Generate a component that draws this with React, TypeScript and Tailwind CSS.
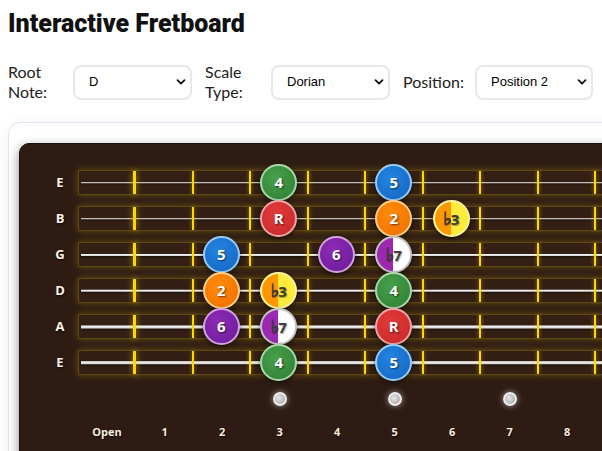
import React from "react";

type Kind = "green" | "blue" | "red" | "orange" | "purple" | "flat3" | "flat7";

type GuitarString = {
  name: string;
  thick: string;
  notes: Record<number, [string, Kind]>;
};

const strings: GuitarString[] = [
  { name: "E", thick: "h-[1.5px]", notes: { 3: ["4", "green"], 5: ["5", "blue"] } },
  { name: "B", thick: "h-[1.5px]", notes: { 3: ["R", "red"], 5: ["2", "orange"], 6: ["♭3", "flat3"] } },
  { name: "G", thick: "h-[2px]", notes: { 2: ["5", "blue"], 4: ["6", "purple"], 5: ["♭7", "flat7"] } },
  { name: "D", thick: "h-[2.5px]", notes: { 2: ["2", "orange"], 3: ["♭3", "flat3"], 5: ["4", "green"] } },
  { name: "A", thick: "h-[3px]", notes: { 2: ["6", "purple"], 3: ["♭7", "flat7"], 5: ["R", "red"] } },
  { name: "E", thick: "h-[3.5px]", notes: { 3: ["4", "green"], 5: ["5", "blue"] } },
];

const kindClass: Record<Kind, string> = {
  green: "bg-[radial-gradient(circle_at_40%_35%,#47a04a,#2f7d33)] border-[#a8d8aa] text-white",
  blue: "bg-[radial-gradient(circle_at_40%_35%,#2284e0,#1565c0)] border-[#93ccf7] text-white",
  red: "bg-[radial-gradient(circle_at_40%_35%,#e23a3a,#c62828)] border-[#f1a3a3] text-white",
  orange: "bg-[radial-gradient(circle_at_40%_35%,#ff8c0a,#ef6c00)] border-[#ffcf8a] text-white",
  purple: "bg-[radial-gradient(circle_at_40%_35%,#8e2bb4,#6a1b9a)] border-[#d3a2df] text-white",
  flat3: "bg-[linear-gradient(90deg,#ff9800_50%,#ffeb3b_50%)] border-[#fff3a0] text-[#3a3a3a]",
  flat7: "bg-[linear-gradient(90deg,#9c27b0_50%,#ffffff_50%)] border-[#c4c4c4] text-[#3a3a3a]",
};

// frets drawn on each string; only 1-8 fit in the window
const frets = [1, 2, 3, 4, 5, 6, 7, 8, 9];
const labels = [1, 2, 3, 4, 5, 6, 7, 8];
const inlays = [3, 5, 7, 9];

function Note({ label, kind }: { label: string; kind: Kind }) {
  const flat = label.startsWith("♭");
  return (
    <div
      className={`relative z-10 flex h-[37px] w-[37px] shrink-0 items-center justify-center rounded-full border-2 text-[15px] font-bold shadow-[0_2px_5px_rgba(0,0,0,0.5)] ${kindClass[kind]} ${
        flat
          ? "[text-shadow:1px_1px_1px_rgba(0,0,0,0.35)]"
          : "[text-shadow:1px_1px_2px_rgba(0,0,0,0.6)]"
      }`}
      style={{ fontFamily: "'Open Sans', 'DejaVu Sans', sans-serif" }}
    >
      {flat ? (
        <span className="flex items-baseline leading-none">
          <span
            className="mr-[-1px] text-[18px] leading-none [-webkit-text-stroke:0.9px_#3a3a3a]"
            style={{ fontFamily: "'DejaVu Sans', sans-serif" }}
          >
            ♭
          </span>
          <span>{label.slice(1)}</span>
        </span>
      ) : (
        label
      )}
    </div>
  );
}

function Select({ value, options, width }: { value: string; options: string[]; width: string }) {
  return (
    <div className={`relative ${width} shrink-0`}>
      <select
        defaultValue={value}
        className="h-[35px] w-full appearance-none rounded-[8px] border-2 border-[#e6e8ec] bg-white pl-[14px] text-[13px] text-black outline-none"
        style={{ fontFamily: "'Liberation Sans', Arial, sans-serif" }}
      >
        {options.map((o) => (
          <option key={o}>{o}</option>
        ))}
      </select>
      <svg
        className="pointer-events-none absolute right-[6px] top-1/2 h-[10px] w-[10px] -translate-y-1/2"
        viewBox="0 0 10 10"
        fill="none"
      >
        <path d="M1.5 3.2 5 6.7 8.5 3.2" stroke="#111" strokeWidth="1.8" strokeLinecap="round" strokeLinejoin="round" />
      </svg>
    </div>
  );
}

function StringRow({ s }: { s: GuitarString }) {
  return (
    <div className="flex items-center">
      <div
        className="w-[30px] shrink-0 text-center text-[13px] font-bold text-[#fbf3e4] [text-shadow:1px_1px_2px_rgba(0,0,0,0.8)]"
        style={{ fontFamily: "'Open Sans', sans-serif" }}
      >
        {s.name}
      </div>
      <div className="relative ml-[3px] flex h-[25px] shrink-0 border border-[rgba(255,215,0,0.22)] bg-[rgba(120,80,20,0.08)] shadow-[0_0_7px_rgba(255,215,0,0.28)]">
        <div
          className={`absolute left-[2px] right-0 top-1/2 -translate-y-1/2 ${s.thick} bg-[linear-gradient(180deg,#ffffff,#cfcfcf)] shadow-[0_1px_2px_rgba(0,0,0,0.6)]`}
        />
        <div className="w-[54px] shrink-0" />
        <div className="relative h-full w-[3px] shrink-0 bg-[#ffd700] shadow-[0_0_6px_rgba(255,215,0,0.7)]" />
        {frets.map((f) => (
          <div key={f} className="flex h-full shrink-0">
            <div className="flex w-[55.5px] items-center justify-center">
              {s.notes[f] && <Note label={s.notes[f][0]} kind={s.notes[f][1]} />}
            </div>
            <div className="relative h-full w-[2px] bg-[#ffd700] shadow-[0_0_4px_rgba(255,215,0,0.55)]" />
          </div>
        ))}
      </div>
    </div>
  );
}

export default function App() {
  return (
    <div className="h-[451px] w-[602px] overflow-hidden bg-white px-[8px] pt-[9px]" style={{ fontFamily: "Lato, 'Open Sans', sans-serif" }}>
      <h1 className="whitespace-nowrap text-[25px] font-black leading-[29px] text-[#111]" style={{ fontFamily: "Roboto, Lato, sans-serif" }}>
        Interactive Fretboard
      </h1>

      <div className="mt-[24px] flex items-center gap-[13px] whitespace-nowrap">
        <label className="w-[52px] shrink-0 whitespace-normal text-[16px] leading-[20px] text-[#222]">Root Note:</label>
        <Select value="D" options={["C", "C#", "D", "D#", "E", "F", "F#", "G", "G#", "A", "A#", "B"]} width="w-[119px]" />
        <label className="w-[53px] shrink-0 whitespace-normal text-[16px] leading-[20px] text-[#222]">Scale Type:</label>
        <Select value="Dorian" options={["Major", "Minor", "Dorian", "Phrygian", "Lydian", "Mixolydian", "Locrian"]} width="w-[119px]" />
        <label className="w-[59px] shrink-0 text-[16px] leading-[20px] text-[#222]">Position:</label>
        <Select value="Position 2" options={["Position 1", "Position 2", "Position 3", "Position 4", "Position 5"]} width="w-[118px]" />
      </div>

      <div className="mt-[20px] w-[820px] rounded-[12px] border border-[#dfe5f7] bg-white pl-[10px] pt-[20px] shadow-[0_4px_18px_rgba(0,0,0,0.06)]">
        <div className="h-[340px] w-[790px] rounded-[10px] border border-[#1c110b] bg-[#2e1c14] pl-[25px] pt-[26px] shadow-[0_4px_12px_rgba(0,0,0,0.45)]">
          <div className="flex flex-col gap-[11px]">
            {strings.map((s, i) => (
              <StringRow key={i} s={s} />
            ))}
          </div>

          <div className="ml-[33px] mt-[17px] flex h-[14px]">
            <div className="w-[58px] shrink-0" />
            {frets.map((f) => (
              <div key={f} className="flex w-[57.5px] shrink-0 items-center justify-center">
                {inlays.includes(f) && (
                  <div className="h-[14px] w-[14px] rounded-full border-2 border-[#eeeeee] bg-[radial-gradient(circle_at_40%_40%,#e8e8e8,#9a9a9a)] shadow-[0_0_6px_rgba(255,255,255,0.55)]" />
                )}
              </div>
            ))}
          </div>

          <div
            className="ml-[33px] mt-[19px] flex text-[11px] font-bold leading-[14px] text-[#f6eedc] [text-shadow:1px_1px_1px_rgba(0,0,0,0.7)]"
            style={{ fontFamily: "'Open Sans', sans-serif" }}
          >
            <div className="w-[58px] shrink-0 text-center">Open</div>
            {labels.map((f) => (
              <div key={f} className="w-[57.5px] shrink-0 text-center">
                {f}
              </div>
            ))}
          </div>
        </div>
      </div>
    </div>
  );
}
